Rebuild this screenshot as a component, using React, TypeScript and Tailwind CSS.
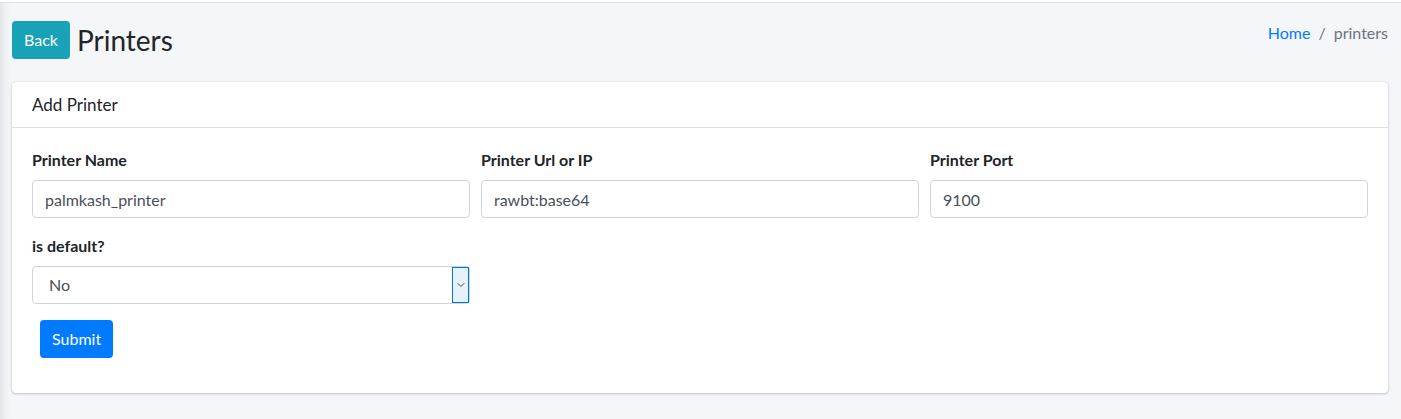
import { ChevronDown } from "lucide-react";

const fieldClass =
  "block h-[38px] w-full rounded border border-[#ced4da] bg-white px-3 text-base text-[#495057] outline-none";

const Field = ({ label, value }: { label: string; value: string }) => (
  <div className="flex flex-col">
    <label className="mb-2 text-base font-bold leading-6 text-[#212529]">{label}</label>
    <input className={fieldClass} defaultValue={value} type="text" />
  </div>
);

const App = () => {
  return (
    <div
      className="min-h-[419px] bg-[#f4f6f9] shadow-[inset_10px_0_10px_-8px_rgba(0,0,0,0.10)]"
      style={{ fontFamily: "Lato, 'Noto Sans', sans-serif" }}
    >
      <div className="h-[3px] border-b border-[#dee2e6] bg-white" />

      <div className="flex items-start justify-between pl-3 pr-[13px] pt-[18px]">
        <div className="flex items-center gap-[7px]">
          <button className="h-[38px] rounded bg-[#17a2b8] px-3 text-base text-white">Back</button>
          <h1 className="text-[28px] leading-[38px] text-[#212529]">Printers</h1>
        </div>
        <nav className="flex items-center gap-2 text-base leading-6">
          <a className="text-[#007bff]" href="#">
            Home
          </a>
          <span className="text-[#6c757d]">/</span>
          <span className="text-[#6c757d]">printers</span>
        </nav>
      </div>

      <div className="pl-3 pr-[13px] pt-[23px]">
        <div className="rounded bg-white shadow-[0_0_1px_rgba(0,0,0,0.125),0_1px_3px_rgba(0,0,0,0.2)]">
          <div className="border-b border-[#dee2e6] px-5 pb-[10px] pt-[11px]">
            <h3 className="text-[17px] leading-6 text-[#212529]">Add Printer</h3>
          </div>
          <div className="px-5 pb-[35px] pt-[20px]">
            <div className="grid grid-cols-3 gap-x-[11px]">
              <Field label="Printer Name" value="palmkash_printer" />
              <Field label="Printer Url or IP" value="rawbt:base64" />
              <Field label="Printer Port" value="9100" />
            </div>
            <div className="mt-[16px] grid grid-cols-3 gap-x-[11px]">
              <div className="flex flex-col">
                <label className="mb-2 text-base font-bold leading-6 text-[#212529]">is default?</label>
                <div className="relative">
                  <select className={`${fieldClass} appearance-none pl-4`} defaultValue="No">
                    <option>No</option>
                    <option>Yes</option>
                  </select>
                  <div className="pointer-events-none absolute right-[1px] top-[1px] flex h-[36px] w-[17px] items-center justify-center border border-[#0078d7] bg-[#e5f1fb]">
                    <ChevronDown size={12} strokeWidth={1.75} className="text-[#333]" />
                  </div>
                </div>
              </div>
            </div>
            <button className="ml-2 mt-[16px] h-[38px] rounded bg-[#007bff] px-3 text-base text-white">Submit</button>
          </div>
        </div>
      </div>
    </div>
  );
};

export default App;
